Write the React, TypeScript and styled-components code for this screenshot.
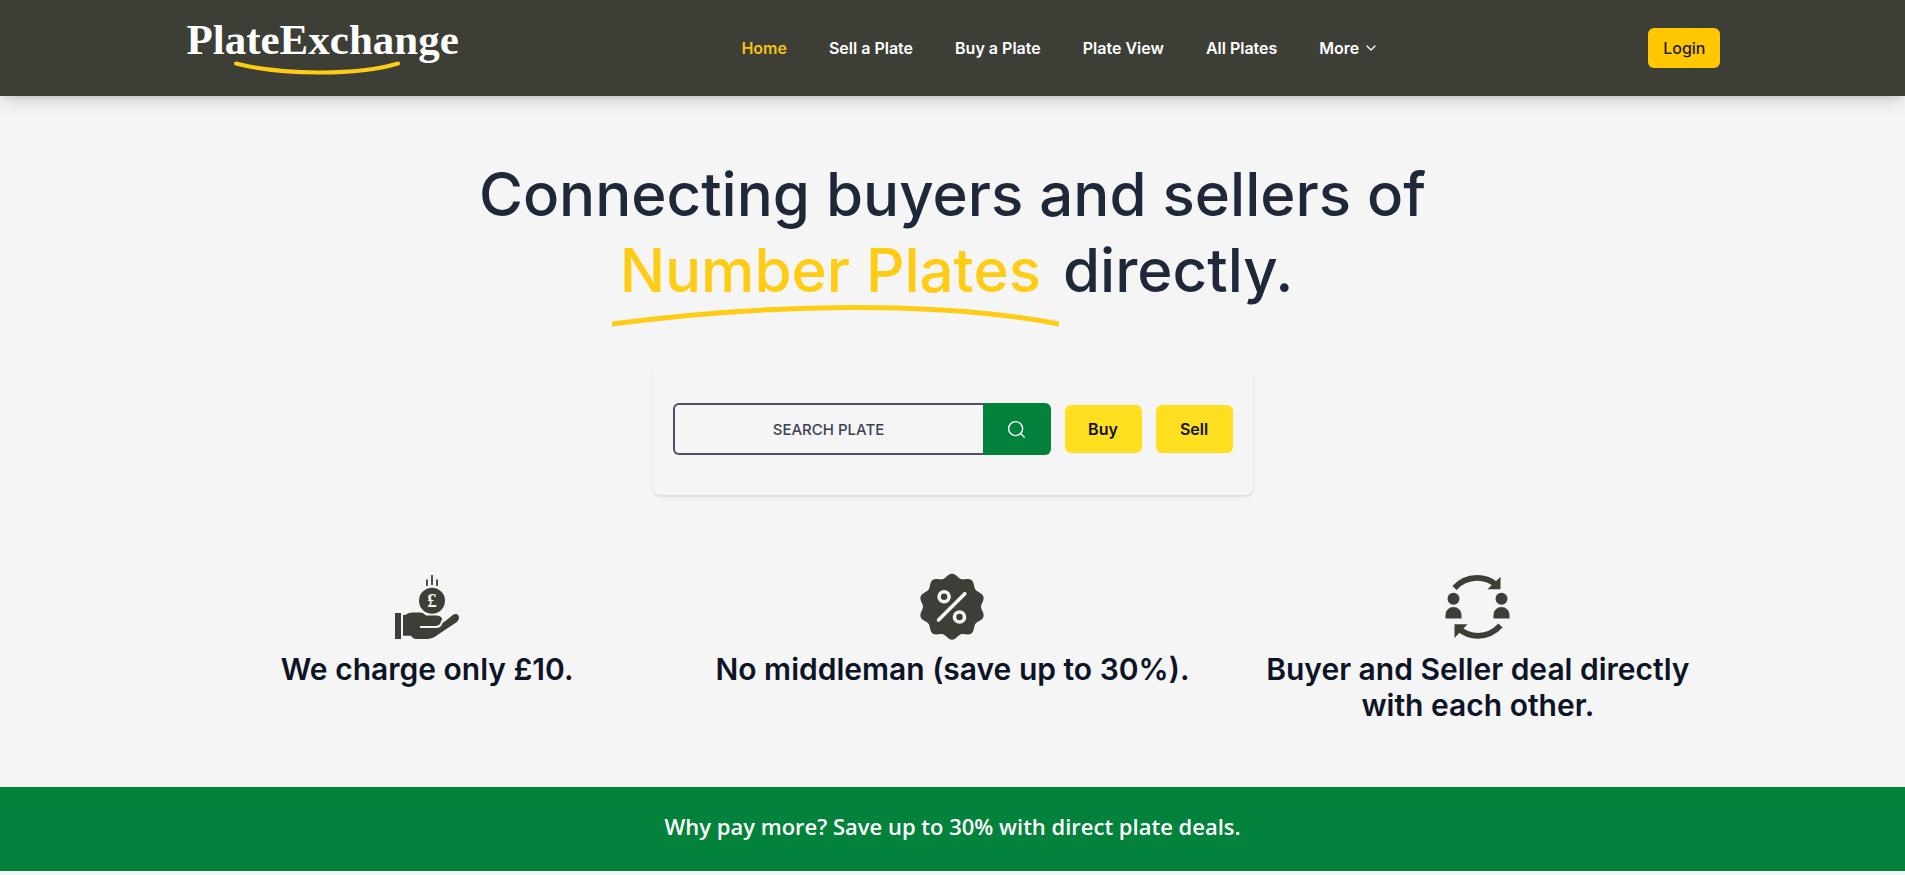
import React from "react";
import styled, { createGlobalStyle } from "styled-components";
import { ChevronDown, Search } from "lucide-react";

const GlobalStyle = createGlobalStyle`
  *, *::before, *::after { box-sizing: border-box; }
  body {
    margin: 0;
    background: #f5f5f5;
    color: #0c1425;
    font-family: Inter, "Liberation Sans", sans-serif;
    font-size: 16px;
  }
  button, input { font: inherit; }
  h1, h2, p { margin: 0; }
`;

const Header = styled.header`
  position: relative;
  background: #3d3e36;
  box-shadow: 0 10px 16px -3px rgba(0, 0, 0, 0.12), 0 4px 6px -3px rgba(0, 0, 0, 0.1);
`;

const Container = styled.div`
  width: 100%;
  max-width: 1536px;
  margin: 0 auto;
`;

const Bar = styled(Container)`
  display: flex;
  align-items: center;
  justify-content: space-between;
  min-height: 96px;
`;

const Logo = styled.a`
  position: relative;
  display: block;
  min-width: 288px;
  padding: 0 2px 16px;
  color: #fff;
  font-family: "Liberation Serif", serif;
  font-size: 43px;
  font-weight: 700;
  line-height: 48px;
  text-decoration: none;
`;

const Smile = styled.svg`
  position: absolute;
  left: 46px;
  bottom: 3px;
`;

const Nav = styled.nav`
  display: flex;
  align-items: center;
  gap: 42px;
`;

const NavLink = styled.a<{ $active?: boolean }>`
  color: ${(p) => (p.$active ? "#f5c211" : "#fff")};
  font-size: 16px;
  font-weight: 600;
  line-height: 24px;
  text-decoration: none;
`;

const MoreButton = styled.button`
  display: flex;
  align-items: center;
  gap: 4px;
  padding: 0;
  border: 0;
  background: none;
  color: #fff;
  font-size: 16px;
  font-weight: 600;
  line-height: 24px;
`;

const LoginButton = styled.button`
  height: 40px;
  padding: 0 15px;
  border: 0;
  border-radius: 6px;
  background: #ffc800;
  color: #1f2018;
  font-size: 16px;
  font-weight: 500;
`;

const Hero = styled.section`
  display: flex;
  flex-direction: column;
  align-items: center;
  padding: 60px 0 64px;
`;

const Title = styled.h1`
  max-width: 1024px;
  color: #1f2838;
  font-size: 60px;
  font-weight: 500;
  line-height: 76px;
  text-align: center;
`;

const Highlight = styled.span`
  position: relative;
  display: inline-block;
  padding: 0 6px 0 8px;
  color: #ffcc14;
`;

const Underline = styled.svg`
  position: absolute;
  left: 0;
  bottom: -20px;
  width: calc(100% + 12px);
  height: 24px;
`;

const SearchCard = styled.form`
  display: flex;
  align-items: center;
  gap: 14px;
  width: 100%;
  max-width: 600px;
  margin-top: 55px;
  padding: 40px 20px;
  border-radius: 8px;
  box-shadow: 0 2px 3px rgba(0, 0, 0, 0.1);
`;

const SearchGroup = styled.div`
  display: flex;
  flex: 1;
  min-width: 0;
  height: 52px;
`;

const SearchInput = styled.input`
  flex: 1;
  min-width: 0;
  padding: 0 16px;
  border: 2px solid #4d5064;
  border-right: 0;
  border-radius: 6px 0 0 6px;
  background: transparent;
  color: #374151;
  font-size: 15px;
  font-weight: 500;
  text-align: center;
  &::placeholder { color: #3b4354; opacity: 1; }
`;

const SearchButton = styled.button`
  display: flex;
  align-items: center;
  justify-content: center;
  width: 68px;
  padding: 0;
  border: 0;
  border-radius: 0 6px 6px 0;
  background: #02823a;
  color: #fff;
`;

const ActionButton = styled.button`
  width: 77px;
  height: 48px;
  padding: 0;
  border: 0;
  border-radius: 6px;
  background: #ffdf20;
  color: #111;
  font-size: 16px;
  font-weight: 600;
`;

const Features = styled(Container)`
  display: grid;
  grid-template-columns: repeat(3, 1fr);
  gap: 40px;
  margin-top: 79px;
`;

const Feature = styled.div`
  display: flex;
  flex-direction: column;
  align-items: center;
  gap: 12px;
  text-align: center;
`;

const FeatureTitle = styled.h2`
  color: #0c1425;
  font-size: 30px;
  font-weight: 600;
  line-height: 36px;
`;

const FeatureIcon = styled.svg`
  width: 65px;
  height: 65px;
  overflow: visible;
  color: #3d3e36;
`;

const Banner = styled.section`
  padding: 23px 16px 29px;
  background: #02823a;
  color: #fff;
  font-family: "Open Sans", "Noto Sans", sans-serif;
  font-size: 22px;
  font-weight: 600;
  line-height: 32px;
  text-align: center;
`;

function HandCoinIcon() {
  return (
    <FeatureIcon viewBox="0 0 65 65" fill="currentColor" aria-hidden="true">
      <path d="M32 5.5V12M37 1V11M42 5.5V12" stroke="currentColor" strokeWidth="1.8" />
      <circle cx="37" cy="26.7" r="13" />
      <text x="37" y="33" fill="#f5f5f5" fontFamily="Liberation Serif, serif" fontWeight="700" fontSize="19" textAnchor="middle">£</text>
      <rect x="0" y="39" width="6" height="26" />
      <path d="M8 41H10Q13 38.5 17 38.5H25Q28.500 38.500 31 41.600H42Q46.500 42 47.500 46L48.500 48.500 57.500 41.200Q61 38.800 63.500 41.400 65 45 61.500 48.200L42 61.200Q37 65 32 65H21Q18 65 16 61.700H8Z" />
      <path d="M25 53H41.500Q46.500 52.500 47.500 46" fill="none" stroke="#f5f5f5" strokeWidth="2" />
    </FeatureIcon>
  );
}

function scallop(cx: number, cy: number) {
  const steps = 200;
  const points: string[] = [];
  for (let i = 0; i < steps; i++) {
    const a = (i / steps) * Math.PI * 2;
    const r = 31 + 2 * Math.cos(10 * a);
    points.push(`${(cx + r * Math.sin(a)).toFixed(2)},${(cy - r * Math.cos(a)).toFixed(2)}`);
  }
  return points.join(" ");
}

function PercentBadgeIcon() {
  return (
    <FeatureIcon viewBox="0 0 65 65" fill="none" aria-hidden="true">
      <polygon points={scallop(32, 32.7)} fill="currentColor" />
      <g stroke="#f5f5f5" strokeWidth="3.600" strokeLinecap="round">
        <circle cx="24.100" cy="22.700" r="5" />
        <circle cx="39.500" cy="43" r="5" />
        <path d="M44.800 19.700 18.500 46" />
      </g>
    </FeatureIcon>
  );
}

function PeopleExchangeIcon() {
  return (
    <FeatureIcon viewBox="0 0 65 65" fill="currentColor" aria-hidden="true">
      <circle cx="8.500" cy="24.700" r="6" />
      <circle cx="56.500" cy="24.700" r="6" />
      <path d="M.5 44.500V41a8 8 0 0 1 16 0V44.500ZM48.500 44.500V41a8 8 0 0 1 16 0V44.500Z" />
      <path d="M9.500 14Q18 4 32 3.800 43 3.800 51 10.500M55.500 51.500Q46 61.800 33 61.800 22 61.800 13.500 54.500" fill="none" stroke="currentColor" strokeWidth="5.800" />
      <path d="M55.500 2.700V15.300H42.500ZM9.500 50.300H22.500L9.500 64Z" />
    </FeatureIcon>
  );
}

const links = ["Home", "Sell a Plate", "Buy a Plate", "Plate View", "All Plates"];

const features = [
  { icon: <HandCoinIcon />, title: "We charge only £10." },
  { icon: <PercentBadgeIcon />, title: "No middleman (save up to 30%)." },
  { icon: <PeopleExchangeIcon />, title: "Buyer and Seller deal directly with each other." },
];

export default function App() {
  return (
    <>
      <GlobalStyle />
      <Header>
        <Bar>
          <Logo href="#">
            PlateExchange
            <Smile width="172" height="18" viewBox="0 0 172 18" fill="none" aria-hidden="true">
              <path d="M5 4.500C50 16 125 17 167 4.500" stroke="#ffcc14" strokeWidth="4" strokeLinecap="round" />
            </Smile>
          </Logo>
          <Nav>
            {links.map((label, i) => (
              <NavLink key={label} href="#" $active={i === 0}>{label}</NavLink>
            ))}
            <MoreButton type="button">More <ChevronDown size={16} strokeWidth={2} /></MoreButton>
          </Nav>
          <LoginButton type="button">Login</LoginButton>
        </Bar>
      </Header>
      <main>
        <Hero>
          <Title>
            Connecting buyers and sellers of{" "}
            <Highlight>
              Number Plates
              <Underline viewBox="0 0 446 24" preserveAspectRatio="none" fill="none" aria-hidden="true">
                <path d="M0 20C160 -1 325 -3 446 20" stroke="#ffcc14" strokeWidth="5" />
              </Underline>
            </Highlight>{" "}
            directly.
          </Title>
          <SearchCard onSubmit={(e) => e.preventDefault()}>
            <SearchGroup>
              <SearchInput type="text" aria-label="Search plate" placeholder="SEARCH PLATE" />
              <SearchButton type="submit" aria-label="Search"><Search size={21} strokeWidth={1.6} /></SearchButton>
            </SearchGroup>
            <ActionButton type="button">Buy</ActionButton>
            <ActionButton type="button">Sell</ActionButton>
          </SearchCard>
          <Features>
            {features.map((f) => (
              <Feature key={f.title}>
                {f.icon}
                <FeatureTitle>{f.title}</FeatureTitle>
              </Feature>
            ))}
          </Features>
        </Hero>
        <Banner>
          <p>Why pay more? Save up to 30% with direct plate deals.</p>
        </Banner>
      </main>
    </>
  );
}
